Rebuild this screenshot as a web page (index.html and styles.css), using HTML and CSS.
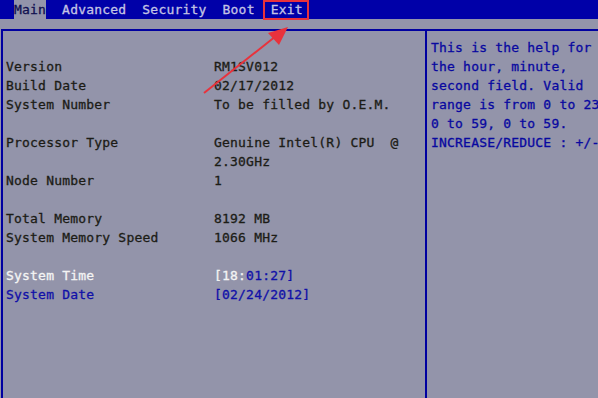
FILE: index.html
```html
<!DOCTYPE html>
<html lang="en">
<head>
    <meta charset="UTF-8">
    <title>BIOS Setup - Main</title>
    <link rel="stylesheet" href="styles.css">
</head>
<body>
    <!-- Tab bar -->
    <div class="tab-bar">
        <span class="tab active">Main</span>
        <span class="tab">Advanced</span>
        <span class="tab">Security</span>
        <span class="tab">Boot</span>
        <span class="tab exit">Exit</span>
    </div>

    <!-- Main frame -->
    <div class="frame">
        <div class="info">
            <div class="row"><span>Version</span><span>RM1SV012</span></div>
            <div class="row"><span>Build Date</span><span>02/17/2012</span></div>
            <div class="row"><span>System Number</span><span>To be filled by O.E.M.</span></div>
            <div class="row blank"></div>
            <div class="row"><span>Processor Type</span><span>Genuine Intel(R) CPU&nbsp; @<br>2.30GHz</span></div>
            <div class="row"><span>Node Number</span><span>1</span></div>
            <div class="row blank"></div>
            <div class="row"><span>Total Memory</span><span>8192 MB</span></div>
            <div class="row"><span>System Memory Speed</span><span>1066 MHz</span></div>
            <div class="row blank"></div>
            <div class="row selected"><span>System Time</span><span>[18:<span class="blue">01:27]</span></span></div>
            <div class="row blue"><span>System Date</span><span>[02/24/2012]</span></div>
        </div>
        <div class="help">
            This is the help for<br>
            the hour, minute,<br>
            second field. Valid<br>
            range is from 0 to 23<br>
            0 to 59, 0 to 59.<br>
            INCREASE/REDUCE : +/-
        </div>
    </div>

    <!-- Annotation arrow pointing at Exit -->
    <svg class="arrow" width="598" height="398" viewBox="0 0 598 398">
        <line x1="204" y1="93" x2="276" y2="36" stroke="#e8323c" stroke-width="2"/>
        <polygon points="288,27 268,33 279,45" fill="#e8323c"/>
    </svg>
</body>
</html>
```

FILE: styles.css
```css
/* Page: BIOS grey with a monospaced font */
body {
    margin: 0;
    width: 598px;
    height: 398px;
    overflow: hidden;
    background-color: #9394aa;
    font-family: "DejaVu Sans Mono", "Liberation Mono", monospace;
    font-size: 13px;
    letter-spacing: 0.2px;
    color: #1c1c16;
    -webkit-text-stroke: 0.3px currentColor; /* heavier BIOS-style glyphs */
    position: relative;
}

/* Top tab bar */
.tab-bar {
    height: 19px;
    background-color: #0000a8;
    display: flex;
    gap: 16px;
    padding-left: 14px;
}

.tab {
    color: #c4c4e4;
    line-height: 19px;
}

.tab.active {
    background-color: #9394aa;
    color: #101050;
}

/* Red annotation box round the Exit tab */
.tab.exit {
    position: relative;
}

.tab.exit::after {
    content: "";
    position: absolute;
    top: 0;
    left: -8px;
    right: -6px;
    height: 20px;
    border: 2px solid #e8323c;
    box-sizing: border-box;
}

/* Frame below the bar */
.frame {
    margin-top: 10px;
    margin-left: 1px;
    border-top: 2px solid #0000a0;
    border-left: 2px solid #0000a0;
    height: 367px;
    display: grid;
    grid-template-columns: 422px 1fr;
}

.info {
    padding: 26px 0 0 3px;
}

.row {
    display: grid;
    grid-template-columns: 208px 1fr;
    line-height: 19px;
    white-space: nowrap;
}

.row.blank {
    height: 19px;
}

.row.selected {
    color: #f4f4f4;
}

.blue {
    color: #1010a8;
}

/* Help panel on the right */
.help {
    border-left: 2px solid #0000a0;
    padding: 7px 0 0 4px;
    line-height: 19px;
    color: #0808a0;
    white-space: nowrap;
    overflow: hidden;
}

/* Arrow overlay */
.arrow {
    position: absolute;
    top: 0;
    left: 0;
    pointer-events: none;
}
```
